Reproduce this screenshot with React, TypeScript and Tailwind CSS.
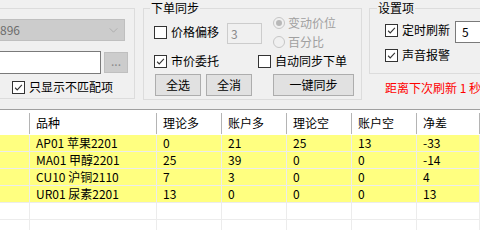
import React from "react";

const FONT = "font-['Segoe_UI','Noto_Sans_CJK_SC','Noto_Sans',sans-serif]";

function CheckMark() {
  return (
    <svg viewBox="0 0 13 13" className="w-[13px] h-[13px]">
      <polyline
        points="2.5,6.8 5,9.3 10.5,3.5"
        fill="none"
        stroke="#333"
        strokeWidth="1.3"
      />
    </svg>
  );
}

function Check({ label, checked = false }: { label: string; checked?: boolean }) {
  return (
    <label className="flex items-center gap-[4px] h-[16px] whitespace-nowrap">
      <span className="w-[13px] h-[13px] border border-[#333] bg-white flex items-center justify-center shrink-0">
        {checked && <CheckMark />}
      </span>
      <span>{label}</span>
    </label>
  );
}

function Radio({ label, checked = false }: { label: string; checked?: boolean }) {
  return (
    <div className="flex items-center gap-[3px] h-[19px] text-[#a0a0a0] whitespace-nowrap">
      <span className="w-[12px] h-[12px] rounded-full border border-[#c6c6c6] bg-[#f0f0f0] flex items-center justify-center">
        {checked && <span className="w-[6px] h-[6px] rounded-full bg-[#b8b8b8]" />}
      </span>
      <span>{label}</span>
    </div>
  );
}

function Btn({ label, w }: { label: string; w: string }) {
  return (
    <button className={`${w} h-[22px] bg-[#e1e1e1] border border-[#adadad] flex items-center justify-center`}>
      {label}
    </button>
  );
}

const rows = [
  ["AP01 苹果2201", "0", "21", "25", "13", "-33"],
  ["MA01 甲醇2201", "25", "39", "0", "0", "-14"],
  ["CU10 沪铜2110", "7", "3", "0", "0", "4"],
  ["UR01 尿素2201", "13", "0", "0", "0", "13"],
];

const cols = "grid grid-cols-[30px_127px_65px_65px_65px_65px_63px]";

export default function App() {
  return (
    <div className={`w-[480px] h-[230px] overflow-hidden bg-[#f0f0f0] text-[12px] leading-[16px] text-black ${FONT}`}>
      {/* settings panel */}
      <div className="h-[109px] flex">
        {/* left group */}
        <div className="shrink-0 w-[135px] h-[91px] mt-[8px] border border-l-0 border-[#dcdcdc] flex flex-col">
          <div className="mt-[10px] w-[125px] h-[22px] bg-[#cccccc] border border-l-0 border-[#bfbfbf] flex items-center justify-between pr-[6px] text-[#6d6d6d]">
            <span>896</span>
            <svg viewBox="0 0 10 6" className="w-[9px] h-[5px]">
              <polyline points="0.5,0.5 5,5 9.5,0.5" fill="none" stroke="#a8a8a8" strokeWidth="1" />
            </svg>
          </div>
          <div className="mt-[10px] flex items-center gap-[3px]">
            <div className="w-[101px] h-[23px] bg-white border border-l-0 border-[#7a7a7a]" />
            <div className="w-[24px] h-[21px] bg-[#cccccc] border border-[#bfbfbf] flex items-center justify-center text-[#8a8a8a] pb-[3px]">
              ...
            </div>
          </div>
          <div className="mt-[5px] pl-[12px]">
            <Check label="只显示不匹配项" checked />
          </div>
        </div>

        {/* middle group */}
        <fieldset className="shrink-0 ml-[8px] w-[219px] h-[100px] border border-[#dcdcdc] px-0 pb-0">
          <legend className="ml-[6px] px-[1px] leading-[16px]">下单同步</legend>
          <div className="flex items-start h-[32px] pl-[10px]">
            <div className="mt-[8px] w-[73px]">
              <Check label="价格偏移" />
            </div>
            <div className="mt-[7px] w-[35px] h-[21px] border border-[#cccccc] bg-[#f0f0f0] text-[#8a8a8a] pl-[3px] flex items-center">
              3
            </div>
            <div className="-mt-[3px] ml-[11px] flex flex-col">
              <Radio label="变动价位" checked />
              <Radio label="百分比" />
            </div>
          </div>
          <div className="flex mt-[5px] pl-[10px]">
            <div className="w-[104px]">
              <Check label="市价委托" checked />
            </div>
            <Check label="自动同步下单" />
          </div>
          <div className="flex mt-[5px] pl-[11px]">
            <Btn label="全选" w="w-[46px]" />
            <div className="ml-[5px]">
              <Btn label="全消" w="w-[46px]" />
            </div>
            <div className="ml-[21px]">
              <Btn label="一键同步" w="w-[81px]" />
            </div>
          </div>
        </fieldset>

        {/* right group */}
        <div className="shrink-0 ml-[7px] flex flex-col">
          <fieldset className="w-[120px] h-[74px] border border-r-0 border-[#dcdcdc] px-0 pb-0">
            <legend className="ml-[7px] px-[1px] leading-[16px]">设置项</legend>
            <div className="flex items-start pl-[15px]">
              <div className="mt-[6px] w-[70px]">
                <Check label="定时刷新" checked />
              </div>
              <div className="mt-[5px] h-[22px] flex-1 bg-white border border-r-0 border-[#7a7a7a] pl-[6px] flex items-center">
                5
              </div>
            </div>
            <div className="mt-[4px] pl-[15px]">
              <Check label="声音报警" checked />
            </div>
          </fieldset>
          <div className="mt-[6px] pl-[16px] text-[#ff0000] whitespace-nowrap">距离下次刷新 1 秒</div>
        </div>
      </div>

      {/* grid */}
      <div className="border-t border-[#a0a0a0] bg-white">
        <div className={`${cols} h-[25px] bg-white`}>
          {["", "品种", "理论多", "账户多", "理论空", "账户空", "净差"].map((h, i) => (
            <div key={i} className="relative flex items-center pl-[6px] after:content-[''] after:absolute after:right-0 after:top-[3px] after:bottom-[1px] after:w-px after:bg-[#b4b4b4]">
              {h}
            </div>
          ))}
        </div>
        {rows.map((r, i) => (
          <div key={i} className={`${cols} h-[17px] bg-[#ffff80] border-b border-[#ececec]`}>
            <div className="border-r border-[#ececec]" />
            {r.map((c, j) => (
              <div key={j} className="flex items-center pl-[6px] border-r border-[#ececec] whitespace-nowrap">
                {c}
              </div>
            ))}
          </div>
        ))}
        {[0, 1].map((i) => (
          <div key={i} className={`${cols} h-[17px] bg-white border-b border-[#ececec]`}>
            {[0, 1, 2, 3, 4, 5, 6].map((j) => (
              <div key={j} className="border-r border-[#ececec]" />
            ))}
          </div>
        ))}
      </div>
    </div>
  );
}
